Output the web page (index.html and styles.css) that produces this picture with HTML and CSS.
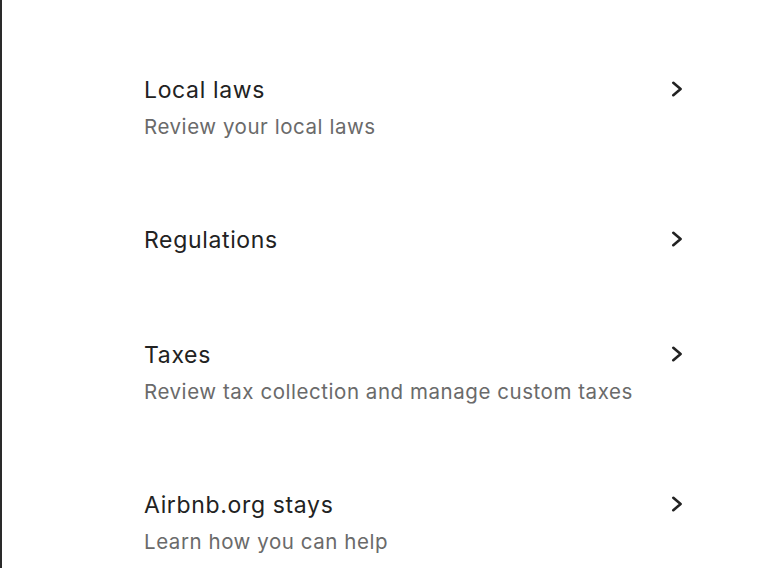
FILE: index.html
```html
<!DOCTYPE html>
<html lang="en">
<head>
<meta charset="utf-8">
<title>Local laws</title>
<link rel="stylesheet" href="styles.css">
</head>
<body>
<div class="page">
  <ul class="list">
    <li class="row">
      <div class="text">
        <div class="title">Local laws</div>
        <div class="sub">Review your local laws</div>
      </div>
      <svg class="chev" viewBox="0 0 12 16" width="12" height="16" aria-hidden="true"><polyline points="2.3,1.8 9.6,8 2.3,14.2"/></svg>
    </li>
    <li class="row">
      <div class="text">
        <div class="title">Regulations</div>
      </div>
      <svg class="chev" viewBox="0 0 12 16" width="12" height="16" aria-hidden="true"><polyline points="2.3,1.8 9.6,8 2.3,14.2"/></svg>
    </li>
    <li class="row">
      <div class="text">
        <div class="title">Taxes</div>
        <div class="sub">Review tax collection and manage custom taxes</div>
      </div>
      <svg class="chev" viewBox="0 0 12 16" width="12" height="16" aria-hidden="true"><polyline points="2.3,1.8 9.6,8 2.3,14.2"/></svg>
    </li>
    <li class="row">
      <div class="text">
        <div class="title">Airbnb.org stays</div>
        <div class="sub">Learn how you can help</div>
      </div>
      <svg class="chev" viewBox="0 0 12 16" width="12" height="16" aria-hidden="true"><polyline points="2.3,1.8 9.6,8 2.3,14.2"/></svg>
    </li>
  </ul>
</div>
</body>
</html>
```

FILE: styles.css
```css
html, body {
  margin: 0;
  padding: 0;
  background: #ffffff;
}
body {
  font-family: Inter, "Liberation Sans", sans-serif;
  color: #222222;
}
.page {
  height: 568px;
  overflow: hidden;
  border-left: 2px solid #2a2a2a;
  box-sizing: border-box;
  padding: 32px 0 0 142px;
}
.list {
  list-style: none;
  margin: 0;
  padding: 0;
  width: 539px;
}
.row {
  display: flex;
  align-items: flex-start;
  justify-content: space-between;
  padding: 44px 0 43px;
}
.text {
  display: flex;
  flex-direction: column;
  gap: 11px;
}
.title {
  font-size: 23px;
  line-height: 28px;
  letter-spacing: 0.65px;
  color: #222222;
}
.sub {
  font-size: 20.5px;
  line-height: 24px;
  letter-spacing: 0.55px;
  color: #6a6a6a;
}
.chev {
  flex: none;
  margin-top: 5px;
  fill: none;
  stroke: #222222;
  stroke-width: 2.6;
  stroke-linecap: round;
  stroke-linejoin: round;
}
```
